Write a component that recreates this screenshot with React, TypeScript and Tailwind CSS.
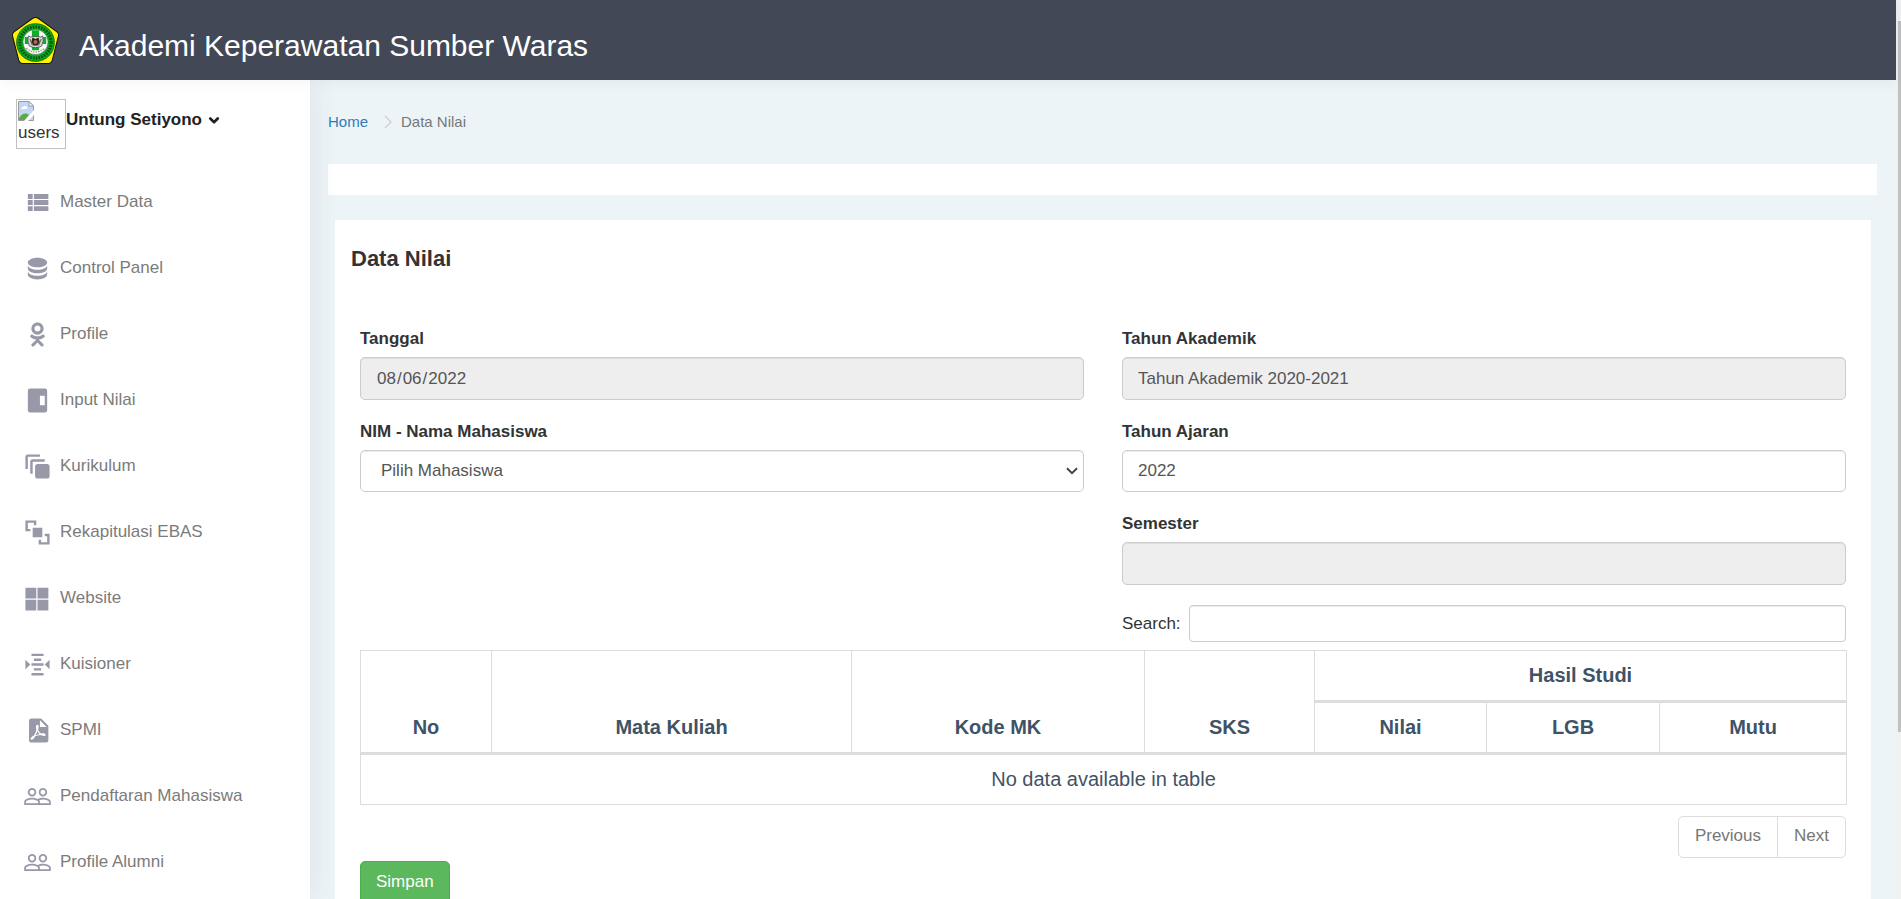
import type { ReactNode } from "react";
import { FaAngleDown } from "react-icons/fa6";
import { MdPeopleOutline } from "react-icons/md";

const MenuGlyph = ({ d }: { d: string }) => (
  <svg viewBox="0 0 24 24" className="size-[29px] fill-current" aria-hidden="true">
    <path fillRule="evenodd" d={d} />
  </svg>
);

const people = <MdPeopleOutline className="size-[29px]" aria-hidden="true" />;

const menu: { label: string; icon: ReactNode }[] = [
  {
    label: "Master Data",
    icon: <MenuGlyph d="M9,5V9H21V5M9,19H21V15H9M9,14H21V10H9M4,9H8V5H4M4,19H8V15H4M4,14H8V10H4V14Z" />,
  },
  {
    label: "Control Panel",
    icon: (
      <MenuGlyph d="M12,3C7.58,3 4,4.79 4,7C4,9.21 7.58,11 12,11C16.42,11 20,9.21 20,7C20,4.79 16.42,3 12,3M4,9V12C4,14.21 7.58,16 12,16C16.42,16 20,14.21 20,12V9C20,11.21 16.42,13 12,13C7.58,13 4,11.21 4,9M4,14V17C4,19.21 7.58,21 12,21C16.42,21 20,19.21 20,17V14C20,16.21 16.42,18 12,18C7.58,18 4,16.21 4,14Z" />
    ),
  },
  {
    label: "Profile",
    icon: (
      <MenuGlyph d="M17.83,12.74C17.55,12.17 16.76,11.69 15.71,12.5C14.28,13.64 12,13.64 12,13.64C12,13.64 9.72,13.64 8.29,12.5C7.24,11.69 6.45,12.17 6.17,12.74C5.67,13.74 6.23,14.23 7.5,15.04C8.59,15.74 10.08,16 11.04,16.1L10.24,16.9C9.1,18.03 8,19.12 7.25,19.88C6.8,20.34 6.8,21.07 7.25,21.5L7.39,21.66C7.84,22.11 8.58,22.11 9.03,21.66L12,18.68C13.15,19.81 14.24,20.9 15,21.66C15.45,22.11 16.18,22.11 16.64,21.66L16.77,21.5C17.23,21.07 17.23,20.34 16.77,19.88L13.79,16.9L13,16.09C13.95,16 15.42,15.73 16.5,15.04C17.77,14.23 18.33,13.74 17.83,12.74M12,4.57C13.38,4.57 14.5,5.69 14.5,7.07C14.5,8.45 13.38,9.57 12,9.57C10.62,9.57 9.5,8.45 9.5,7.07C9.5,5.69 10.62,4.57 12,4.57M12,12.12C14.8,12.12 17.06,9.86 17.06,7.07C17.06,4.27 14.8,2 12,2C9.2,2 6.94,4.27 6.94,7.07C6.94,9.86 9.2,12.12 12,12.12Z" />
    ),
  },
  {
    label: "Input Nilai",
    icon: <MenuGlyph d="M6,2H18A2,2 0 0,1 20,4V20A2,2 0 0,1 18,22H6A2,2 0 0,1 4,20V4A2,2 0 0,1 6,2M14,8V16H18V8H14Z" />,
  },
  {
    label: "Kurikulum",
    icon: (
      <MenuGlyph d="M4,2C2.89,2 2,2.89 2,4V14H4V4H14V2H4M8,6C6.89,6 6,6.89 6,8V18H8V8H18V6H8M12,10C10.89,10 10,10.89 10,12V20C10,21.11 10.89,22 12,22H20C21.11,22 22,21.11 22,20V12C22,10.89 21.11,10 20,10H12Z" />
    ),
  },
  {
    label: "Rekapitulasi EBAS",
    icon: <MenuGlyph d="M2,2H11V6H9V4H4V9H6V11H2V2M22,13V22H13V18H15V20H20V15H18V13H22M8,8H16V16H8V8Z" />,
  },
  {
    label: "Website",
    icon: <MenuGlyph d="M2,3H11V12H2V3M11,22H2V13H11V22M21,3V12H12V3H21M21,22H12V13H21V22Z" />,
  },
  {
    label: "Kuisioner",
    icon: (
      <MenuGlyph d="M7,3H17V5H7V3M9,7H15V9H9V7M7,11H17V13H7V11M9,15H15V17H9V15M7,19H17V21H7V19M2,8L6,12L2,16V8M22,8L18,12L22,16V8Z" />
    ),
  },
  {
    label: "SPMI",
    icon: (
      <MenuGlyph d="M14,9H19.5L14,3.5V9M7,2H15L21,8V20A2,2 0 0,1 19,22H7C5.89,22 5,21.1 5,20V4A2,2 0 0,1 7,2M11.93,12.44C12.34,13.34 12.86,14.08 13.46,14.59L13.87,14.91C13,15.07 11.8,15.35 10.53,15.84V15.84L10.42,15.88L10.92,14.84C11.37,13.97 11.7,13.18 11.93,12.44M18.41,16.25C18.59,16.07 18.68,15.84 18.69,15.59C18.72,15.39 18.67,15.2 18.57,15.04C18.28,14.57 17.53,14.35 16.29,14.35L15,14.42L14.13,13.84C13.5,13.32 12.93,12.41 12.53,11.28L12.57,11.14C12.9,9.81 13.21,8.2 12.55,7.54C12.39,7.38 12.17,7.3 11.94,7.3H11.7C11.33,7.3 11,7.69 10.91,8.07C10.54,9.4 10.76,10.13 11.13,11.34V11.35C10.88,12.23 10.56,13.25 10.05,14.28L9.09,16.08L8.2,16.57C7,17.32 6.43,18.16 6.32,18.69C6.28,18.88 6.3,19.05 6.37,19.23L6.4,19.28L6.88,19.59L7.32,19.7C8.13,19.7 9.05,18.75 10.29,16.63L10.47,16.56C11.5,16.23 12.78,16 14.5,15.81C15.53,16.32 16.74,16.55 17.5,16.55C17.94,16.55 18.24,16.44 18.41,16.25Z" />
    ),
  },
  { label: "Pendaftaran Mahasiswa", icon: people },
  { label: "Profile Alumni", icon: people },
];

function Logo() {
  return (
    <svg viewBox="1 1 92 92" className="size-[47px]" aria-hidden="true">
      <path
        d="M47 2 Q50 2 53 4 L89 30 Q93 33 92 38 L80 85 Q78 92 72 92 H22 Q16 92 14 85 L2 38 Q1 33 5 30 L41 4 Q44 2 47 2Z"
        fill="#fff200"
        stroke="#111"
        strokeWidth="2"
      />
      <circle cx="47" cy="51" r="37" fill="#0aa81e" stroke="#0a5a14" strokeWidth="1.5" />
      <circle cx="47" cy="51" r="30.5" fill="none" stroke="#064d0e" strokeWidth="6" strokeDasharray="3 2.5" />
      <circle cx="47" cy="50" r="24.5" fill="#fafafa" stroke="#555" strokeWidth="1" />
      <path d="M40 27 H54 V40 H68 V54 H54 V66 H40 V54 H26 V40 H40Z" fill="#0fb028" />
      <path d="M33 38 Q38 42 41 39 H53 Q56 42 61 38 Q64 48 59 58 Q47 64 35 58 Q30 48 33 38Z" fill="#d6d6d6" stroke="#444" strokeWidth="1.5" />
      <path d="M36 44 L41 57 M58 44 L53 57" fill="none" stroke="#666" strokeWidth="2" />
      <path d="M41 41 L47 44 L53 41 L55 50 L51 57 H43 L39 50Z" fill="#2a211b" />
      <circle cx="47" cy="50" r="4" fill="#a9713f" />
      <path d="M29 62 Q47 77 65 62" fill="none" stroke="#888" strokeWidth="2" strokeDasharray="3 2" />
    </svg>
  );
}

function MissingPicture() {
  return (
    <span className="flex size-[50px] shrink-0 flex-col border border-[#c0c0c0] px-px pt-px">
      <svg viewBox="0 0 16 20" className="h-5 w-4" aria-hidden="true">
        <path d="M0.5 0.5 H11 L15.5 5 V19.5 H0.5Z" fill="#c3d6f5" stroke="#9a9a9a" />
        <path d="M11 0.5 V5 H15.5Z" fill="#fff" stroke="#9a9a9a" />
        <path d="M3 8 Q3 6 5 6 Q6 4 8 5 Q10 6 9 8Z" fill="#fff" />
        <path d="M1 19 V17 Q6 10 11 14 L7 19Z" fill="#5aad3c" />
        <path d="M16 9 L6 20 H10 L16 14Z" fill="#fff" />
      </svg>
      <span className="text-[17px] leading-6 text-[#333]">users</span>
    </span>
  );
}

const label = "mb-[6px] block h-[25px] text-[17px] leading-[25px] font-bold text-[#333]";
const control =
  "block w-full rounded-[5px] border border-[#ccc] text-[17px] text-[#555] shadow-[inset_0_1px_1px_rgba(0,0,0,0.075)]";
const locked = `${control} h-[43px] bg-[#eee] px-[15px]`;
const open = `${control} h-[42px] bg-white`;
const th = "border border-[#ddd] border-b-[3px] p-0 pt-3 pb-3 text-center align-bottom font-bold leading-[25px]";

export default function App() {
  return (
    <div className="flex h-screen overflow-hidden bg-[#ecf4f8] font-['Liberation_Sans',Arial,sans-serif] text-[17px] text-[#333]">
      <div className="flex min-w-0 flex-1 flex-col">
        <header className="relative z-20 flex h-20 shrink-0 items-center bg-[#434857] pl-3 shadow-[0_0_14px_rgba(69,65,78,0.08)]">
          <Logo />
          <h1 className="mt-3 ml-5 text-[30px] leading-9 text-white">Akademi Keperawatan Sumber Waras</h1>
        </header>

        <div className="flex min-h-0 flex-1">
          <aside className="relative z-10 w-[310px] shrink-0 overflow-hidden bg-white shadow-[0_0_28px_rgba(69,65,78,0.1)] [clip-path:inset(0_-40px_0_0)]">
            <div className="flex items-start pt-[19px] pl-4">
              <MissingPicture />
              <button type="button" className="mt-2 flex items-center gap-[6px] leading-[26px] font-bold text-[#222]">
                Untung Setiyono
                <FaAngleDown className="size-3 stroke-[50] stroke-current" aria-hidden="true" />
              </button>
            </div>
            <nav className="mt-5" aria-label="Menu">
              <ul>
                {menu.map(({ label: text, icon }) => (
                  <li key={text}>
                    <a href="#" className="flex h-[66px] items-center gap-2 pl-[23px] text-[#7b7b7b]">
                      <span className="text-[#9798a8]">{icon}</span>
                      {text}
                    </a>
                  </li>
                ))}
              </ul>
            </nav>
          </aside>

          <main className="min-w-0 flex-1 pr-[19px] pl-[18px]">
            <nav className="flex h-[84px] items-center text-[15px]" aria-label="Breadcrumb">
              <a href="#" className="text-[#337ab7]">Home</a>
              <svg viewBox="0 0 8 14" className="mr-[9px] ml-4 h-3.5 w-2" aria-hidden="true">
                <path d="M1 1 L7 7 L1 13" fill="none" stroke="#c8ccd4" strokeWidth="1.2" />
              </svg>
              <span className="text-[#777]">Data Nilai</span>
            </nav>
            <div className="h-[31px] bg-white" />

            <section className="mt-[25px] mr-[6px] ml-[7px] bg-white px-[25px] pt-[25px] pb-10">
              <h2 className="-ml-[9px] h-[81px] text-[22px] leading-[28px] font-bold">Data Nilai</h2>
              <form onSubmit={(e) => e.preventDefault()}>
                <div className="grid grid-cols-2 gap-x-[38px]">
                  <div className="flex flex-col gap-[19px]">
                    <div>
                      <label htmlFor="tanggal" className={label}>Tanggal</label>
                      <input id="tanggal" type="date" readOnly value="2022-08-06" className={locked} />
                    </div>
                    <div>
                      <label htmlFor="mahasiswa" className={label}>NIM - Nama Mahasiswa</label>
                      <div className="relative">
                        <select id="mahasiswa" className={`${open} appearance-none px-5`}>
                          <option>Pilih Mahasiswa</option>
                        </select>
                        <svg
                          viewBox="0 0 12 8"
                          className="pointer-events-none absolute inset-y-0 right-[6px] my-auto h-2 w-3"
                          aria-hidden="true"
                        >
                          <path d="M1 1.2 L6 6.2 L11 1.2" fill="none" stroke="#444" strokeWidth="2" />
                        </svg>
                      </div>
                    </div>
                  </div>
                  <div className="flex flex-col gap-[19px]">
                    <div>
                      <label htmlFor="akademik" className={label}>Tahun Akademik</label>
                      <input id="akademik" readOnly value="Tahun Akademik 2020-2021" className={locked} />
                    </div>
                    <div>
                      <label htmlFor="ajaran" className={label}>Tahun Ajaran</label>
                      <input id="ajaran" defaultValue="2022" className={`${open} px-[15px]`} />
                    </div>
                    <div>
                      <label htmlFor="semester" className={label}>Semester</label>
                      <input id="semester" readOnly className={locked} />
                    </div>
                    <div className="flex h-[39px] items-center gap-2">
                      <label htmlFor="search">Search:</label>
                      <input
                        id="search"
                        type="search"
                        className="h-[37px] min-w-0 flex-1 rounded-[4px] border border-[#ccc] px-3 shadow-[inset_0_1px_1px_rgba(0,0,0,0.075)]"
                      />
                    </div>
                  </div>
                </div>

                <table className="mt-[7px] w-full table-fixed border-collapse text-[20px] text-[#3f5367]">
                  <colgroup>
                    <col className="w-[131px]" />
                    <col className="w-[360px]" />
                    <col className="w-[293px]" />
                    <col className="w-[170px]" />
                    <col className="w-[172px]" />
                    <col className="w-[173px]" />
                    <col className="w-[187px]" />
                  </colgroup>
                  <thead>
                    <tr>
                      <th rowSpan={2} className={th}>No</th>
                      <th rowSpan={2} className={th}>Mata Kuliah</th>
                      <th rowSpan={2} className={th}>Kode MK</th>
                      <th rowSpan={2} className={th}>SKS</th>
                      <th colSpan={3} className={th}>Hasil Studi</th>
                    </tr>
                    <tr>
                      <th className={th}>Nilai</th>
                      <th className={th}>LGB</th>
                      <th className={th}>Mutu</th>
                    </tr>
                  </thead>
                  <tbody>
                    <tr>
                      <td colSpan={7} className="border border-[#ddd] py-3 text-center leading-[25px]">
                        No data available in table
                      </td>
                    </tr>
                  </tbody>
                </table>

                <div className="mt-[11px] flex justify-end text-[#777]">
                  <button type="button" className="h-[42px] rounded-l-[5px] border border-[#ddd] px-4 pb-0.5">Previous</button>
                  <button type="button" className="-ml-px h-[42px] rounded-r-[5px] border border-[#ddd] px-4 pb-0.5">Next</button>
                </div>

                <button
                  type="submit"
                  className="mt-[3px] h-[43px] rounded-[5px] border border-[#4cae4c] bg-[#5cb85c] px-[15px] pb-0.5 text-white"
                >
                  Simpan
                </button>
              </form>
            </section>
          </main>
        </div>
      </div>

      <div className="flex w-[5px] shrink-0 flex-col items-end bg-[#f1f1f1] pt-[21px]" aria-hidden="true">
        <div className="h-[81%] w-[3px] bg-[#c1c1c1]" />
      </div>
    </div>
  );
}
